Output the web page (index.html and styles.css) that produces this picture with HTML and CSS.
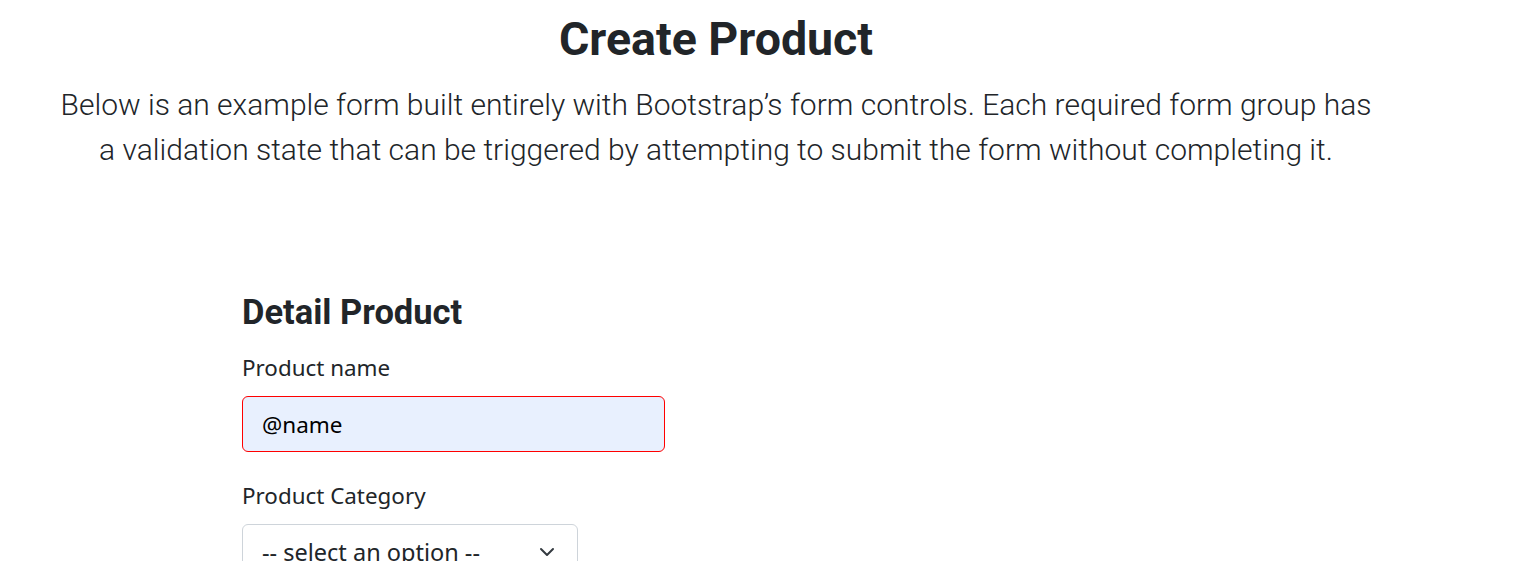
FILE: index.html
```html
<!DOCTYPE html>
<html lang="en">
<head>
<meta charset="utf-8">
<title>Create Product</title>
<link rel="stylesheet" href="styles.css">
</head>
<body>
<header class="intro">
  <h1 class="intro-title">Create Product</h1>
  <p class="intro-lead">Below is an example form built entirely with Bootstrap’s form controls. Each required form group has a validation state that can be triggered by attempting to submit the form without completing it.</p>
</header>
<main class="form-wrap">
  <h2 class="form-title">Detail Product</h2>
  <div class="field">
    <label class="field-label" for="pname">Product name</label>
    <input class="field-input is-invalid" id="pname" type="text" value="@name">
  </div>
  <div class="field">
    <label class="field-label" for="pcat">Product Category</label>
    <div class="select-box" id="pcat">
      <span class="select-text">-- select an option --</span>
      <svg class="select-chevron" width="16" height="16" viewBox="0 0 16 16"><path d="M2 5l6 6 6-6" fill="none" stroke="#343a40" stroke-width="2" stroke-linecap="round" stroke-linejoin="round"/></svg>
    </div>
  </div>
</main>
</body>
</html>
```
FILE: styles.css
```css
* { box-sizing: border-box; }
html, body { margin: 0; padding: 0; background: #fff; color: #212529; }
body { font-family: "Noto Sans", "Open Sans", sans-serif; }

.intro {
  width: 1320px;
  margin-left: 56px;
  text-align: center;
  padding-top: 12px;
}
.intro-title {
  font-family: Roboto, sans-serif;
  font-weight: 700;
  font-size: 46.5px;
  line-height: 1.2;
  margin: 0 0 14px;
  color: #212529;
}
.intro-lead {
  font-family: Roboto, sans-serif;
  font-weight: 300;
  font-size: 30px;
  line-height: 45px;
  margin: 0;
  color: #212529;
}

.form-wrap {
  margin-left: 242px;
  padding-top: 120px;
}
.form-title {
  font-family: Roboto, sans-serif;
  font-weight: 700;
  font-size: 34.5px;
  line-height: 1.2;
  margin: 0 0 20px;
}
.field { margin-bottom: 29px; }
.field-label {
  display: block;
  font-size: 22.4px;
  line-height: 30px;
  margin-bottom: 13px;
}
.field-input {
  display: block;
  width: 423px;
  height: 56px;
  padding: 0 19px;
  font-family: "Noto Sans", sans-serif;
  font-size: 22.5px;
  color: #000;
  background: #e8f0fe;
  border: 1px solid #ff0000;
  border-radius: 6px;
  outline: none;
}
.select-box {
  width: 336px;
  height: 56px;
  border: 1px solid #ced4da;
  border-radius: 6px;
  display: flex;
  align-items: center;
  justify-content: space-between;
  padding: 0 22px 0 19px;
  font-size: 23.5px;
  color: #212529;
}
```
